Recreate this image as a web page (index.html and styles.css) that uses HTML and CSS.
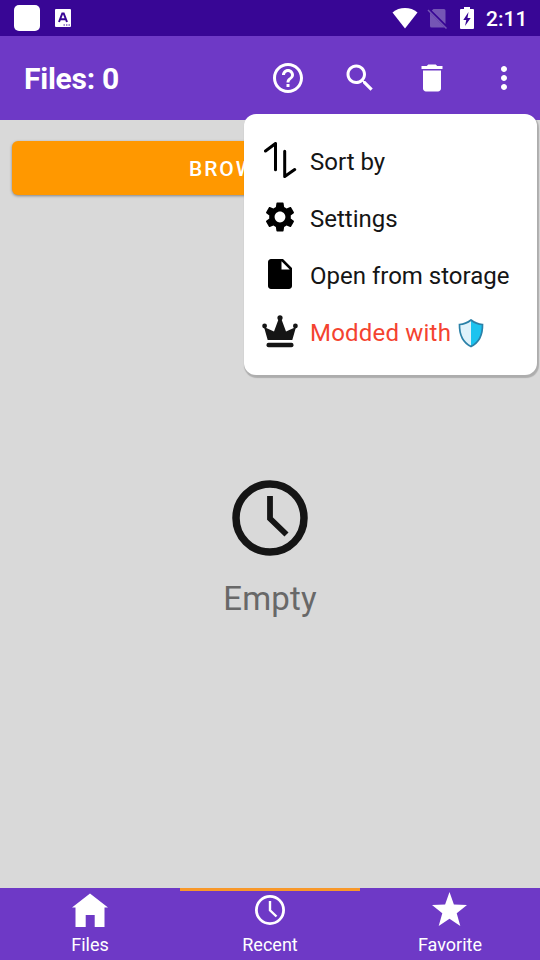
FILE: index.html
```
<!DOCTYPE html>
<html lang="en">
<head>
<meta charset="utf-8">
<title>Files</title>
<link rel="stylesheet" href="styles.css">
</head>
<body>
<div class="screen">
  <div class="status">
    <span class="status-app"></span>
    <svg class="status-lang" width="18" height="20" viewBox="0 0 18 20"><rect x="1" y="1" width="16" height="18" rx="1" fill="#fff"/><path d="M5 14L8.300 5.500h1.400L13 14M6.200 11.200h5.600" fill="none" stroke="#380695" stroke-width="2"/><path d="M9.500 17h1.400M12 17h1.400M14.500 17h1.400" stroke="#380695" stroke-width="1.200"/></svg>
    <div class="status-right">
      <svg width="26" height="22" viewBox="0 0 26 22"><path d="M.5 5.500C4 2.300 8.400 1 13 1s9 1.300 12.500 4.500L13 21.500z" fill="#fff"/></svg>
      <svg class="sim" width="22" height="22" viewBox="0 0 22 22"><path d="M7.500 2H18a1.500 1.500 0 0 1 1.500 1.500V17L5.800 3.600zM4 5.800L18.700 20.500H5.500A1.500 1.500 0 0 1 4 19z" fill="#7555b5"/><path d="M2 3l18.500 18.500" stroke="#7555b5" stroke-width="1.500"/></svg>
      <svg class="battery" width="14" height="22" viewBox="0 0 14 22"><path d="M4 0h6v2h3q1 0 1 1v18q0 1-1 1H1q-1 0-1-1V3q0-1 1-1h3z" fill="#fff"/><path d="M8.500 5L3.300 13h3l-1.300 6 5.700-8H7.500z" fill="#380695"/></svg>
      <span class="time">2:11</span>
    </div>
  </div>
  <header class="toolbar">
    <h1>Files: 0</h1>
    <div class="actions">
      <svg viewBox="0 0 24 24"><path d="M11 18h2v-2h-2v2zm1-16C6.480 2 2 6.480 2 12s4.480 10 10 10 10-4.480 10-10S17.520 2 12 2zm0 18c-4.410 0-8-3.590-8-8s3.590-8 8-8 8 3.590 8 8-3.590 8-8 8zm0-14c-2.210 0-4 1.790-4 4h2c0-1.100.9-2 2-2s2 .9 2 2c0 2-3 1.750-3 5h2c0-2.250 3-2.500 3-5 0-2.210-1.790-4-4-4z"/></svg>
      <svg viewBox="0 0 24 24"><path d="M15.500 14h-.79l-.28-.27C15.410 12.590 16 11.110 16 9.500 16 5.910 13.090 3 9.500 3S3 5.910 3 9.500 5.910 16 9.500 16c1.610 0 3.090-.59 4.230-1.570l.27.28v.79l5 4.990L20.490 19l-4.990-5zm-6 0C7.010 14 5 11.990 5 9.500S7.010 5 9.500 5 14 7.010 14 9.500 11.990 14 9.500 14z"/></svg>
      <svg viewBox="0 0 24 24"><path d="M6 19c0 1.100.9 2 2 2h8c1.100 0 2-.9 2-2V7H6v12zM19 4h-3.500l-1-1h-5l-1 1H5v2h14V4z"/></svg>
      <svg viewBox="0 0 24 24"><path d="M12 8c1.100 0 2-.9 2-2s-.9-2-2-2-2 .9-2 2 .9 2 2 2zm0 2c-1.100 0-2 .9-2 2s.9 2 2 2 2-.9 2-2-.9-2-2-2zm0 6c-1.100 0-2 .9-2 2s.9 2 2 2 2-.9 2-2-.9-2-2-2z"/></svg>
    </div>
  </header>
  <main>
    <button class="browse">BROW</button>
    <section class="empty">
      <svg width="76" height="76" viewBox="0 0 76 76" fill="none" stroke="#151515"><circle cx="38" cy="38" r="34" stroke-width="7.500"/><path d="M38 16v22.500L54.500 54.500" stroke-width="5.800"/></svg>
      <p>Empty</p>
    </section>
  </main>
  <nav>
    <a class="tab"><svg width="36" height="36" viewBox="0 0 36 36"><path d="M18 1.500L36 15.500h-3.500V35h-9.800V23h-9V35H3.500V15.500H0z" fill="#fff"/></svg><span>Files</span></a>
    <a class="tab active"><svg width="36" height="36" viewBox="0 0 36 36" fill="none" stroke="#fff"><circle cx="18" cy="18" r="13.600" stroke-width="2.800"/><path d="M18 9v9.300l6.500 6.200" stroke-width="2.400"/></svg><span>Recent</span></a>
    <a class="tab"><svg width="36" height="36" viewBox="0 0 36 36"><path d="M17.500 0l4.400 12.500L35 13l-10.300 8.300L28.300 34 17.500 26.800 6.700 34l3.600-12.700L0 13l13.100-.5z" fill="#fff"/></svg><span>Favorite</span></a>
  </nav>
  <div class="menu">
    <div class="item"><svg viewBox="0 0 36 36" fill="none" stroke="#000" stroke-width="3" stroke-linecap="round" stroke-linejoin="round"><path d="M3.500 9l10-7.500v26.300M22.700 9.300v25.300l10-7"/></svg><span>Sort by</span></div>
    <div class="item"><svg viewBox="0 0 24 24"><path d="M19.140 12.940c.04-.3.06-.61.06-.94 0-.32-.02-.64-.07-.94l2.030-1.580c.18-.14.23-.41.12-.61l-1.920-3.320c-.12-.22-.37-.29-.59-.22l-2.390.96c-.5-.38-1.030-.7-1.620-.94l-.36-2.540c-.04-.24-.24-.41-.48-.41h-3.840c-.24 0-.43.17-.47.41l-.36 2.540c-.59.24-1.130.57-1.620.94l-2.390-.96c-.22-.08-.47 0-.59.22L2.740 8.870c-.12.21-.08.47.12.61l2.030 1.580c-.05.3-.09.63-.09.94s.02.64.07.94l-2.030 1.580c-.18.14-.23.41-.12.61l1.920 3.320c.12.22.37.29.59.22l2.390-.96c.5.38 1.030.7 1.620.94l.36 2.540c.05.24.24.41.48.41h3.840c.24 0 .44-.17.47-.41l.36-2.540c.59-.24 1.130-.56 1.620-.94l2.390.96c.22.08.47 0 .59-.22l1.920-3.320c.12-.22.07-.47-.12-.61l-2.010-1.580zM12 15.600c-1.980 0-3.600-1.620-3.600-3.600s1.620-3.600 3.600-3.600 3.600 1.620 3.600 3.600-1.620 3.600-3.600 3.600z"/></svg><span>Settings</span></div>
    <div class="item"><svg viewBox="0 0 24 24"><path d="M6 2c-1.100 0-1.990.9-1.990 2L4 20c0 1.100.89 2 1.990 2H18c1.100 0 2-.9 2-2V8l-6-6H6zm7 7V3.500L18.500 9H13z"/></svg><span>Open from storage</span></div>
    <div class="item modded"><svg viewBox="0 0 36 36" fill="#151515"><path d="M5.700 27L2 14l10 4.500L17 5h2l5 13.500L34 14 30.300 27z"/><circle cx="18" cy="4.800" r="2.600"/><circle cx="2.600" cy="13" r="2.400"/><circle cx="33.400" cy="13" r="2.400"/><rect x="4.500" y="29.800" width="27" height="4.400" rx="2"/></svg><span>Modded with</span><svg class="shield" viewBox="0 0 26 30"><path d="M13 2C9.500 4.800 5.500 6.300 1.500 6.500 1.300 16 4 24 13 28.500 22 24 24.700 16 24.500 6.500 20.500 6.300 16.500 4.800 13 2z" fill="#dff2fb"/><path d="M13 2v26.500C22 24 24.700 16 24.500 6.500 20.500 6.300 16.500 4.800 13 2z" fill="#1cc3ef"/><path d="M13 2C9.500 4.800 5.500 6.300 1.500 6.500 1.300 16 4 24 13 28.500 22 24 24.700 16 24.500 6.500 20.500 6.300 16.500 4.800 13 2z" fill="none" stroke="#2b81a8" stroke-width="1.700"/></svg></div>
  </div>
</div>
</body>
</html>
```
FILE: styles.css
```
* { box-sizing: border-box; }
body { margin: 0; font-family: Roboto, sans-serif; }
svg { display: block; flex: none; }
.screen {
  position: relative;
  width: 540px;
  height: 960px;
  display: flex;
  flex-direction: column;
  background: #d9d9d9;
  overflow: hidden;
}
.status {
  height: 36px;
  padding: 0 12px 0 14px;
  display: flex;
  align-items: center;
  background: #380695;
}
.status-app { width: 26px; height: 26px; border-radius: 5px; background: #fff; }
.status-lang { margin-left: 14px; }
.status-right { margin-left: auto; display: flex; align-items: center; height: 34px; }
.sim { margin-left: 8px; }
.battery { margin-left: 12px; }
.time { margin: 1px 0 0 12px; width: 42px; font-size: 21px; font-weight: 500; line-height: 24px; color: #fff; white-space: nowrap; }
.toolbar {
  height: 84px;
  padding: 0 18px 0 24px;
  display: flex;
  align-items: center;
  justify-content: space-between;
  background: #6e39c6;
  color: #fff;
}
h1 { margin: 2px 0 0; font-size: 30px; font-weight: 700; line-height: 36px; letter-spacing: -.25px; }
.actions { display: flex; gap: 36px; }
.actions svg { width: 36px; height: 36px; fill: #fff; }
main { flex: 1; padding: 21px 12px 0; display: flex; flex-direction: column; }
.browse {
  height: 54px;
  border: 0;
  padding: 2px 0 0 177px;
  border-radius: 6px;
  background: #ff9800;
  color: #fff;
  font: 500 21px/52px Roboto, sans-serif;
  letter-spacing: 1.9px;
  text-align: left;
  box-shadow: 0 1px 3px rgba(0,0,0,.4);
}
.empty { margin-top: 285px; display: flex; flex-direction: column; align-items: center; }
.empty p { margin: 22px 0 0; font-size: 33px; line-height: 42px; letter-spacing: .2px; color: #686868; }
nav { height: 72px; display: grid; grid-template-columns: repeat(3, 1fr); background: #6e39c6; }
.tab { border-top: 3px solid transparent; padding-top: 1px; display: flex; flex-direction: column; align-items: center; color: #fff; }
.tab.active { border-top-color: #f8982a; }
.tab span { margin-top: 6px; font-size: 18px; line-height: 21px; }
.menu {
  position: absolute;
  left: 244px;
  top: 114px;
  width: 293px;
  height: 261px;
  padding-top: 18px;
  border-radius: 12px;
  background: #fff;
  box-shadow: 1px 2px 1px 1px rgba(0,0,0,.2);
}
.item { height: 57px; padding-left: 18px; display: flex; align-items: center; font-size: 24px; line-height: 30px; color: #151515; white-space: nowrap; }
.item svg { width: 36px; height: 36px; margin-bottom: 2px; }
.item span { margin: 2px 0 0 12px; }
.item.modded { color: #f44330; }
.modded span { letter-spacing: .2px; }
.item .shield { width: 26px; height: 30px; margin: 3px 0 0 7px; }
```
